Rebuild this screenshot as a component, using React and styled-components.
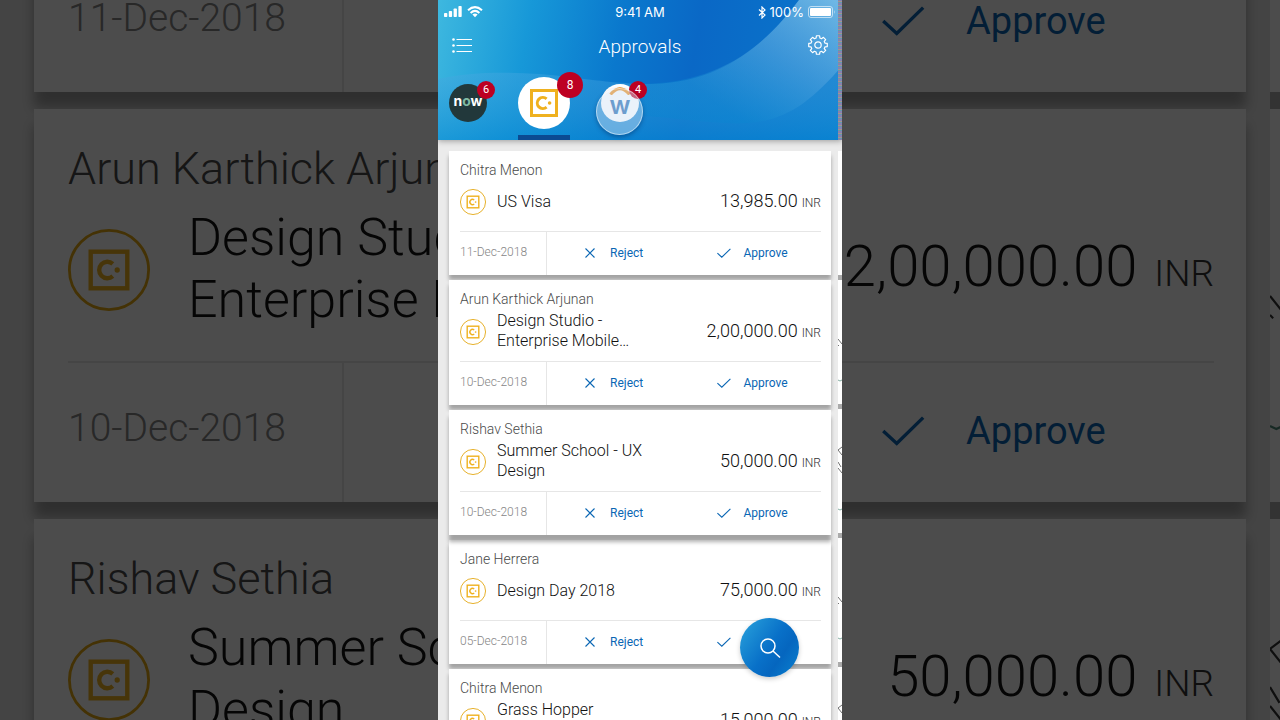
import React from 'react';
import styled, { createGlobalStyle, ThemeProvider, css } from 'styled-components';

const compact = {
  side: 11, padStart: 11, padEnd: 10, top: 10, gap: 5, listTop: 11,
  name: 14, nameLine: 18, bodyGap: 3, body: 40, bodyEnd: 9,
  mark: 26, markGap: 11, title: 16, titleLine: 20, titlePad: 1,
  amount: 18, unit: 12, unitGap: 4,
  rule: 1, footer: 44, dateCell: 87, date: 12, datePad: 4,
  action: 12, icon: 14, iconGap: 13, actionPad: 2, actionStart: 36, actionsEnd: 7,
  blur: 4, drop: 5, peek: 4,
};

const large = {
  side: 34, padStart: 34, padEnd: 32, top: 32, gap: 17, listTop: -301,
  name: 45, nameLine: 56, bodyGap: 10, body: 126, bodyEnd: 28,
  mark: 82, markGap: 38, title: 52, titleLine: 62, titlePad: 2,
  amount: 58, unit: 37, unitGap: 17,
  rule: 2, footer: 141, dateCell: 276, date: 39, datePad: 10,
  action: 38, icon: 43, iconGap: 41, actionPad: 4, actionStart: 114, actionsEnd: 22,
  blur: 12, drop: 16, peek: 10,
};

const GlobalStyle = createGlobalStyle`
  *, *::before, *::after { box-sizing: border-box; }
  body {
    margin: 0;
    font-family: Roboto, "Liberation Sans", sans-serif;
    background: #424242;
  }
  button { font: inherit; border: 0; padding: 0; background: none; cursor: pointer; }
  h1, h2, p, ul { margin: 0; padding: 0; font-weight: inherit; }
`;

const Stage = styled.div`
  position: relative;
  display: flex;
  justify-content: center;
  height: 100vh;
  overflow: hidden;
`;

const Backdrop = styled.div`
  position: absolute;
  z-index: 0;
  inset: 0;
  display: flow-root;
  overflow: hidden;
  background: #e4e4e4;
`;

const Dim = styled.div`
  position: absolute;
  z-index: 6;
  inset: 0;
  background: rgba(0, 0, 0, 0.7);
`;

const Phone = styled.main`
  position: relative;
  z-index: 1;
  width: 100%;
  max-width: 404px;
  overflow: hidden;
  background: #ebebeb;
`;

const Header = styled.header`
  position: relative;
  z-index: 3;
  color: #fff;
  background: linear-gradient(100deg, #3eb8df 0%, #1798d8 22%, #0a78cd 44%, #0a68c6 62%, #0a78cc 100%);
  box-shadow: 0 1px 6px rgba(0, 0, 0, 0.35);
`;

const Waves = styled.svg`
  position: absolute;
  inset: 0;
  width: 100%;
  height: 100%;
`;

const StatusBar = styled.div`
  position: relative;
  display: grid;
  grid-template-columns: 1fr auto 1fr;
  align-items: center;
  height: 24px;
  padding: 0 6px;
  font-family: Inter, "Liberation Sans", sans-serif;
  font-size: 13px;
`;

const StatusGroup = styled.div`
  display: flex;
  align-items: center;
  gap: 4px;
  justify-content: ${(p) => (p.$end ? 'flex-end' : 'flex-start')};
`;

const TitleBar = styled.div`
  position: relative;
  display: flex;
  align-items: center;
  justify-content: space-between;
  height: 46px;
  padding: 0 14px;
`;

const PageTitle = styled.h1`
  font-size: 19px;
  font-weight: 300;
  line-height: 24px;
`;

const IconButton = styled.button`
  display: flex;
  width: 20px;
  height: 24px;
  align-items: center;
  justify-content: center;
  color: #fff;
`;

const Tabs = styled.nav`
  position: relative;
  display: flex;
  gap: 31px;
  height: 70px;
  padding: 0 11px;
`;

const Tab = styled.button`
  display: flex;
  align-items: center;
  border-bottom: 5px solid ${(p) => (p.$active ? '#0b4a92' : 'transparent')};
`;

const AppCircle = styled.span`
  position: relative;
  display: flex;
  align-items: center;
  justify-content: center;
  width: ${(p) => (p.$active ? 52 : 38)}px;
  height: ${(p) => (p.$active ? 52 : 38)}px;
  border-radius: 50%;
  background: ${(p) => (p.$dark ? '#22383b' : '#fff')};
`;

const Badge = styled.span`
  position: absolute;
  display: flex;
  align-items: center;
  justify-content: center;
  color: #fff;
  background: #bd0022;
  border-radius: 50%;
  ${(p) => (p.$active
    ? css`top: -5px; right: -13px; width: 26px; height: 26px; font-size: 12px;`
    : css`top: -3px; right: -8px; width: 18px; height: 18px; font-size: 11px;`)}
`;

const NowMark = styled.span`
  padding-bottom: 3px;
  color: #fff;
  font-family: Inter, sans-serif;
  font-size: 14px;
  font-weight: 700;
  line-height: 16px;
  em { font-style: normal; color: #7fb9a2; }
`;

const WMark = styled.span`
  display: flex;
  flex-direction: column;
  align-items: center;
  padding-bottom: 3px;
  color: #1a66b0;
  font-family: Inter, sans-serif;
  font-size: 25px;
  font-weight: 600;
  line-height: 20px;
  svg { display: block; }
`;

const Touch = styled.span`
  position: absolute;
  top: 4px;
  left: -5px;
  width: 47px;
  height: 47px;
  border-radius: 50%;
  border: 1px solid rgba(255, 255, 255, 0.5);
  background: rgba(208, 226, 244, 0.45);
  box-shadow: 0 2px 4px rgba(0, 30, 80, 0.4);
`;

const List = styled.ul`
  display: flex;
  flex-direction: column;
  gap: ${(p) => p.theme.gap}px;
  margin-top: ${(p) => p.theme.listTop}px;
  padding: 0 ${(p) => p.theme.side}px;
  list-style: none;
`;

const Card = styled.li`
  position: relative;
  z-index: ${(p) => (p.$raised ? 2 : 1)};
  flex: none;
  padding: ${(p) => p.theme.top}px ${(p) => p.theme.padEnd}px 0 ${(p) => p.theme.padStart}px;
  background: #fff;
  box-shadow: 0 ${(p) => p.theme.drop + (p.$raised ? 2 : 0)}px ${(p) => p.theme.blur}px rgba(0, 0, 0, 0.31);
`;

const Person = styled.p`
  color: #4a4a4a;
  font-size: ${(p) => p.theme.name}px;
  font-weight: 300;
  line-height: ${(p) => p.theme.nameLine}px;
`;

const Body = styled.div`
  display: flex;
  align-items: center;
  min-height: ${(p) => p.theme.body}px;
  margin: ${(p) => p.theme.bodyGap}px 0 ${(p) => p.theme.bodyEnd}px;
`;

const Title = styled.h2`
  flex: 1;
  margin-left: ${(p) => p.theme.markGap}px;
  padding-bottom: ${(p) => p.theme.titlePad}px;
  color: #111;
  font-size: ${(p) => p.theme.title}px;
  font-weight: 300;
  line-height: ${(p) => p.theme.titleLine}px;
  white-space: nowrap;
`;

const TitleLine = styled.span`
  display: block;
  min-height: ${(p) => p.theme.titleLine}px;
`;

const Amount = styled.p`
  display: flex;
  align-items: baseline;
  gap: ${(p) => p.theme.unitGap}px;
  color: #111;
  font-size: ${(p) => p.theme.amount}px;
  font-weight: 300;
  line-height: ${(p) => p.theme.titleLine}px;
`;

const Unit = styled.span`
  color: #333;
  font-size: ${(p) => p.theme.unit}px;
`;

const Footer = styled.div`
  display: flex;
  height: ${(p) => p.theme.footer}px;
  padding-right: ${(p) => p.theme.actionsEnd}px;
  border-top: ${(p) => p.theme.rule}px solid #e6e6e6;
`;

const DateCell = styled.div`
  display: flex;
  flex: none;
  align-items: center;
  width: ${(p) => p.theme.dateCell}px;
  padding-bottom: ${(p) => p.theme.datePad}px;
  border-right: ${(p) => p.theme.rule}px solid #e6e6e6;
  color: #858585;
  font-size: ${(p) => p.theme.date}px;
  font-weight: 300;
`;

const Action = styled.button`
  display: flex;
  flex: 1;
  align-items: center;
  gap: ${(p) => p.theme.iconGap}px;
  padding: 0 0 ${(p) => p.theme.actionPad}px ${(p) => p.theme.actionStart}px;
  color: #0a66b4;
  font-size: ${(p) => p.theme.action}px;
  svg {
    flex: none;
    width: ${(p) => p.theme.icon}px;
    height: ${(p) => p.theme.icon}px;
  }
`;

const MarkSvg = styled.svg`
  flex: none;
  width: ${(p) => p.theme.mark}px;
  height: ${(p) => p.theme.mark}px;
`;

const Peek = styled.div`
  position: absolute;
  z-index: 4;
  top: 0;
  right: 0;
  bottom: 0;
  display: flex;
  flex-direction: column;
  width: ${(p) => p.theme.peek}px;
  overflow: hidden;
`;

const PeekHeader = styled.div`
  flex: none;
  height: 140px;
  background: repeating-linear-gradient(#7f86b4 0 1px, #a8918f 1px 2px, #5f9bb0 2px 3px, #8d7fae 3px 4px);
`;

const PeekStack = styled.div`
  display: flex;
  flex-direction: column;
  gap: ${(p) => p.theme.gap}px;
  margin-top: ${(p) => p.theme.listTop}px;
  background: #ababab;
`;

const PeekSlab = styled.svg`
  display: block;
  width: 100%;
  aspect-ratio: ${(p) => (p.theme.peek === 4 ? '4 / 124' : '10 / 393')};
  background: #fff;
`;

const Fab = styled.button`
  position: absolute;
  z-index: 5;
  right: 43px;
  bottom: 43px;
  display: flex;
  align-items: center;
  justify-content: center;
  width: 59px;
  height: 59px;
  border-radius: 50%;
  color: #fff;
  background: linear-gradient(125deg, #259bd9 8%, #0870c8 50%, #0566bf 68%, #0a82d0 100%);
  box-shadow: 0 2px 5px rgba(0, 0, 0, 0.2);
`;

const Glyph = ({ size = 20, h, box = '0 0 20 20', children, w = 1, ...rest }) => (
  <svg width={size} height={h || size} viewBox={box} fill="none" stroke="currentColor" strokeWidth={w} aria-hidden="true" {...rest}>
    {children}
  </svg>
);

const ConcurShape = () => (
  <g fill="none" stroke="#efb11f">
    <rect x="1.5" y="1.5" width="25" height="25" strokeWidth="3" />
    <path d="M16.6 9.8A5.6 5.6 0 1 0 16.6 18.2" strokeWidth="3" />
    <circle cx="19.6" cy="14" r="1.8" fill="#efb11f" stroke="none" />
  </g>
);

const ConcurMark = () => (
  <MarkSvg viewBox="0 0 82 82" aria-hidden="true">
    <circle cx="41" cy="41" r="39.6" fill="none" stroke="#e3a712" strokeWidth="2.8" />
    <g transform="translate(20.5 20.5) scale(1.464)"><ConcurShape /></g>
  </MarkSvg>
);

const requests = [
  { name: 'Chitra Menon', title: ['US Visa'], amount: '13,985.00', date: '11-Dec-2018' },
  { name: 'Arun Karthick Arjunan', title: ['Design Studio -', 'Enterprise Mobile…'], amount: '2,00,000.00', date: '10-Dec-2018' },
  { name: 'Rishav Sethia', title: ['Summer School - UX', 'Design'], amount: '50,000.00', date: '10-Dec-2018', raised: true },
  { name: 'Jane Herrera', title: ['Design Day 2018'], amount: '75,000.00', date: '05-Dec-2018' },
  { name: 'Chitra Menon', title: ['Grass Hopper', ''], amount: '15,000.00', date: '05-Dec-2018' },
];

const Approvals = ({ items }) => (
  <List>
    {items.map((r, i) => (
      <Card key={i} $raised={r.raised}>
        <Person>{r.name}</Person>
        <Body>
          <ConcurMark />
          <Title>{r.title.map((t, n) => <TitleLine key={n}>{t}</TitleLine>)}</Title>
          <Amount>{r.amount}<Unit>INR</Unit></Amount>
        </Body>
        <Footer>
          <DateCell>{r.date}</DateCell>
          <Action type="button">
            <Glyph box="0 0 14 14" w={1.1}><path d="M2.5 2.5 11.5 11.5M11.5 2.5 2.5 11.5" /></Glyph>
            Reject
          </Action>
          <Action type="button">
            <Glyph box="0 0 14 14" w={1.1}><path d="M.4 7.2 4.800 11.200 13.400 2.800" /></Glyph>
            Approve
          </Action>
        </Footer>
      </Card>
    ))}
  </List>
);

const PeekCards = ({ count }) => (
  <PeekStack>
    {Array.from({ length: count }, (_, i) => (
      <PeekSlab key={i} viewBox="0 0 4 124" preserveAspectRatio="xMinYMin slice" aria-hidden="true">
        {i > 0 && (
          <g fill="none" stroke="#333" strokeWidth=".7">
            <path d={i % 2 ? 'M0 59 4 64M0 65 1 66' : 'M4 38 0 41 4 46M0 53 3 58M0 59 4 64'} />
            <path d="M0 100 2 101 4 100" stroke="#4f8a7a" />
          </g>
        )}
      </PeekSlab>
    ))}
  </PeekStack>
);

const gearPath = (() => {
  const pts = [];
  const teeth = 8;
  for (let i = 0; i < teeth; i += 1) {
    const a = (i * 2 * Math.PI) / teeth - Math.PI / 2;
    [[-0.27, 7.2], [-0.17, 9.4], [0.17, 9.4], [0.27, 7.2]].forEach(([d, r]) => {
      pts.push(`${(10 + r * Math.cos(a + d)).toFixed(2)} ${(10 + r * Math.sin(a + d)).toFixed(2)}`);
    });
  }
  return `M${pts.join('L')}Z`;
})();

export default function App() {
  return (
    <>
      <GlobalStyle />
      <Stage>
        <ThemeProvider theme={large}>
          <Backdrop aria-hidden="true" inert>
            <Approvals items={requests.slice(0, 3)} />
            <Peek><PeekCards count={3} /></Peek>
            <Dim />
          </Backdrop>
        </ThemeProvider>
        <ThemeProvider theme={compact}>
          <Phone>
            <Header>
              <Waves viewBox="0 0 404 140" preserveAspectRatio="none" aria-hidden="true">
                <defs>
                  <linearGradient id="right" gradientUnits="userSpaceOnUse" x1="395" y1="0" x2="310" y2="125">
                    <stop offset="0" stopColor="#7cc0e8" stopOpacity=".85" />
                    <stop offset=".5" stopColor="#4a9fdc" stopOpacity=".6" />
                    <stop offset="1" stopColor="#0a86d0" stopOpacity=".4" />
                  </linearGradient>
                  <linearGradient id="low" x1="0" y1="0" x2="0" y2="1">
                    <stop offset="0" stopColor="#8fc8ee" stopOpacity=".16" />
                    <stop offset="1" stopColor="#0a8ad4" stopOpacity=".6" />
                  </linearGradient>
                </defs>
                <path d="M0 79C40 70 90 72 130 77S190 84 215 84C290 82 332 38 361 0H404V140H0Z" fill="url(#low)" />
                <path d="M200 84C290 84 332 38 361 0H404V66C370 105 345 123 300 123.500C265 123 235 117 200 116Z" fill="url(#right)" />
              </Waves>
              <StatusBar>
                <StatusGroup>
                  <svg width="19" height="12" viewBox="0 0 19 12" fill="#fff" aria-hidden="true">
                    <rect y="7" width="3.300" height="4" rx=".8" /><rect x="4.800" y="5" width="3.300" height="6" rx=".8" />
                    <rect x="9.600" y="2.500" width="3.300" height="8.500" rx=".8" /><rect x="14.400" y="0" width="3.300" height="11" rx=".8" />
                  </svg>
                  <svg width="16" height="12" viewBox="0 1 16 12" fill="none" stroke="#fff" strokeWidth="2" aria-hidden="true">
                    <path d="M1 5.300Q8-1 15 5.300M3.600 7.900Q8 3.900 12.400 7.900" />
                    <path d="M8 12.200 5.400 9.600Q8 7.500 10.600 9.600Z" fill="#fff" stroke="none" />
                  </svg>
                </StatusGroup>
                <span>9:41 AM</span>
                <StatusGroup $end>
                  <Glyph size={8} h={13} box="0 0 8 13" w={1.2}><path d="M1 3.500 7 9 4 12V1L7 4 1 9.500" /></Glyph>
                  <span>100%</span>
                  <svg width="28" height="12" viewBox="0 0 28 12" aria-hidden="true">
                    <rect x=".5" y=".5" width="24" height="11" rx="2.500" fill="none" stroke="#fff" strokeOpacity=".6" />
                    <rect x="2" y="2" width="21" height="8" rx="1" fill="#fff" />
                    <path d="M26 4v4q1.500-2 0-4" fill="#fff" fillOpacity=".6" />
                  </svg>
                </StatusGroup>
              </StatusBar>
              <TitleBar>
                <IconButton type="button" aria-label="Menu">
                  <Glyph size={20} w={1.200}>
                    <path d="M4.500 2.500H20M4.500 8.500H20M4.500 14.500H20" />
                    <g fill="currentColor" stroke="none"><circle cx="1.500" cy="2.500" r="1.300" /><circle cx="1.500" cy="8.500" r="1.300" /><circle cx="1.500" cy="14.500" r="1.300" /></g>
                  </Glyph>
                </IconButton>
                <PageTitle>Approvals</PageTitle>
                <IconButton type="button" aria-label="Settings">
                  <Glyph size={20} box="0 2 20 20" w={1.200} strokeLinejoin="round" overflow="visible"><path d={gearPath} /><circle cx="10" cy="10" r="3.200" /></Glyph>
                </IconButton>
              </TitleBar>
              <Tabs>
                <Tab type="button">
                  <AppCircle $dark><NowMark>n<em>o</em>w</NowMark><Badge>6</Badge></AppCircle>
                </Tab>
                <Tab type="button" $active>
                  <AppCircle $active>
                    <svg width="28" height="28" viewBox="0 0 28 28" aria-hidden="true"><ConcurShape /></svg>
                    <Badge $active>8</Badge>
                  </AppCircle>
                </Tab>
                <Tab type="button">
                  <AppCircle>
                    <WMark>
                      <svg width="22" height="8" viewBox="0 0 22 8" fill="none" stroke="#f08a10" strokeWidth="3"><path d="M1.500 7.500Q11-4 20.500 7.500" /></svg>
                      w
                    </WMark>
                    <Badge>4</Badge>
                    <Touch />
                  </AppCircle>
                </Tab>
              </Tabs>
            </Header>
            <Approvals items={requests} />
            <Peek>
              <PeekHeader />
              <PeekCards count={5} />
            </Peek>
            <Fab type="button" aria-label="Search">
              <Glyph size={22} box="0 0 22 22" w={1.500}><circle cx="9" cy="9" r="7" /><path d="M14 14 21 20.500" /></Glyph>
            </Fab>
          </Phone>
        </ThemeProvider>
      </Stage>
    </>
  );
}
